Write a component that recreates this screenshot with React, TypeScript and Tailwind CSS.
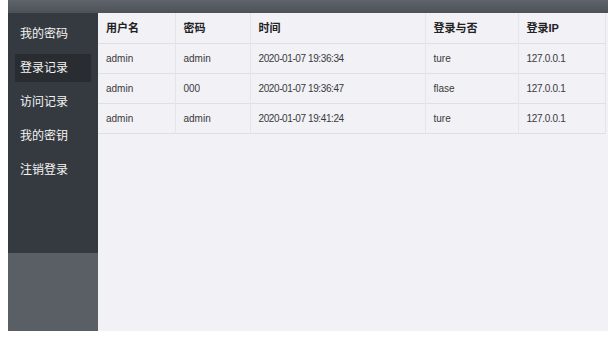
// Admin console page: sidebar navigation and login-record table
import React from 'react';

// Sidebar menu entries
const menu = ['我的密码', '登录记录', '访问记录', '我的密钥', '注销登录'];

// Login records shown in the table
const rows = [
  { user: 'admin', pwd: 'admin', time: '2020-01-07 19:36:34', ok: 'ture', ip: '127.0.0.1' },
  { user: 'admin', pwd: '000', time: '2020-01-07 19:36:47', ok: 'flase', ip: '127.0.0.1' },
  { user: 'admin', pwd: 'admin', time: '2020-01-07 19:41:24', ok: 'ture', ip: '127.0.0.1' },
];

const font = { fontFamily: '"Liberation Sans", "Noto Sans CJK SC", sans-serif' };

const App: React.FC = () => {
  return (
    <div className="w-[615px] h-[339px] bg-white" style={font}>
      <div className="ml-[8px] w-[600px] h-[331px] flex flex-col">
        {/* Top bar */}
        <div className="h-[13px] bg-gradient-to-b from-[#5e646a] to-[#4c5258]" />

        <div className="flex flex-1 min-h-0">
          {/* Sidebar */}
          <aside className="w-[90px] flex flex-col">
            <div className="h-[240px] bg-[#343a40] px-[7px] pt-[7px] flex flex-col gap-[6px]">
              {menu.map((m, i) => (
                <div
                  key={m}
                  className={`h-[28px] pl-[5px] flex items-center text-[12px] text-[#f4f4f4] ${i === 1 ? 'bg-[#292d32]' : ''}`}
                >
                  {m}
                </div>
              ))}
            </div>
            <div className="flex-1 bg-[#5a5f66]" />
          </aside>

          {/* Main content */}
          <main className="flex-1 bg-[#f1f1f6]">
            <table className="w-[508px] border-collapse text-[10px] text-[#3a3a3a]">
              <thead>
                <tr className="h-[30px] border-b border-[#dde1e6]">
                  <th className="w-[77px] pl-[8px] text-left font-bold text-[11px] text-[#222] border-r border-[#e2e5ea]">用户名</th>
                  <th className="w-[75px] pl-[8px] text-left font-bold text-[11px] text-[#222] border-r border-[#e2e5ea]">密码</th>
                  <th className="w-[175px] pl-[8px] text-left font-bold text-[11px] text-[#222] border-r border-[#e2e5ea]">时间</th>
                  <th className="w-[93px] pl-[8px] text-left font-bold text-[11px] text-[#222] border-r border-[#e2e5ea]">登录与否</th>
                  <th className="pl-[8px] text-left font-bold text-[11px] text-[#222] border-r border-[#e2e5ea]">登录IP</th>
                </tr>
              </thead>
              <tbody>
                {rows.map((r, i) => (
                  <tr key={i} className="h-[30px] border-b border-[#dde1e6]">
                    <td className="pl-[8px] border-r border-[#e2e5ea]">{r.user}</td>
                    <td className="pl-[8px] border-r border-[#e2e5ea]">{r.pwd}</td>
                    <td className="pl-[8px] border-r border-[#e2e5ea] tracking-[-0.4px]">{r.time}</td>
                    <td className="pl-[8px] border-r border-[#e2e5ea]">{r.ok}</td>
                    <td className="pl-[8px] border-r border-[#e2e5ea] tracking-[-0.3px]">{r.ip}</td>
                  </tr>
                ))}
              </tbody>
            </table>
          </main>
        </div>
      </div>
    </div>
  );
};

export default App;
